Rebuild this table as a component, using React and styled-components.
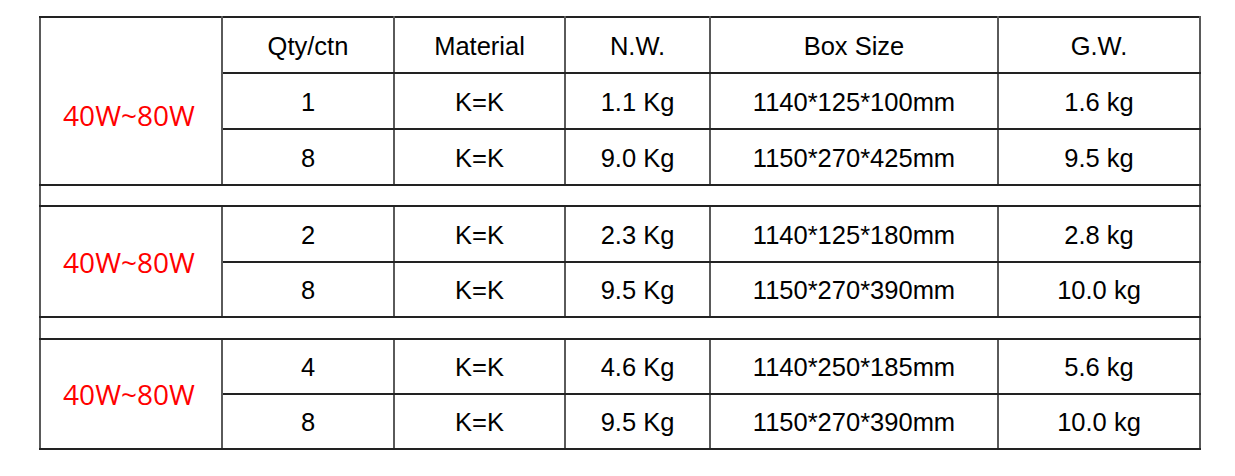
import React from "react";
import styled, { createGlobalStyle } from "styled-components";

const Global = createGlobalStyle`
  html, body { margin: 0; padding: 0; background: #fff; }
  body { font-family: "Liberation Sans", Arial, sans-serif; }
`;

const Page = styled.div`
  padding: 16px 0 0 39px;
`;

const Table = styled.table`
  border-collapse: collapse;
  table-layout: fixed;
  width: 1162px;
`;

const Cell = styled.td`
  border-top: 2px solid #222;
  border-bottom: 2px solid #222;
  border-left: 2px solid #5a5a5a;
  border-right: 2px solid #5a5a5a;
  height: ${(p) => p.$h || 54}px;
  padding: 3px 0 0 0;
  box-sizing: border-box;
  text-align: center;
  vertical-align: middle;
  font-size: 25.5px;
  color: #000;
  line-height: 1;
`;

const Label = styled(Cell)`
  font-family: "Open Sans", "Noto Sans", sans-serif;
  font-size: 28px;
  color: #ff0000;
  padding: ${(p) => p.$pt || 0}px 4px 0 0;
`;

const Spacer = styled.td`
  border-top: 2px solid #222;
  border-bottom: 2px solid #222;
  border-left: 2px solid #5a5a5a;
  border-right: 2px solid #5a5a5a;
  height: ${(p) => p.$h}px;
  padding: 0;
`;

const widths = [182, 172, 171, 145, 288, 202];

const groups = [
  {
    rows: [
      ["1", "K=K", "1.1 Kg", "1140*125*100mm", "1.6 kg"],
      ["8", "K=K", "9.0 Kg", "1150*270*425mm", "9.5 kg"],
    ],
    heights: [56, 56],
  },
  {
    rows: [
      ["2", "K=K", "2.3 Kg", "1140*125*180mm", "2.8 kg"],
      ["8", "K=K", "9.5 Kg", "1150*270*390mm", "10.0 kg"],
    ],
    heights: [56, 55],
    spacer: 19,
  },
  {
    rows: [
      ["4", "K=K", "4.6 Kg", "1140*250*185mm", "5.6 kg"],
      ["8", "K=K", "9.5 Kg", "1150*270*390mm", "10.0 kg"],
    ],
    heights: [55, 55],
    spacer: 20,
  },
];

const header = ["Qty/ctn", "Material", "N.W.", "Box Size", "G.W."];

export default function App() {
  return (
    <Page>
      <Global />
      <Table>
        <colgroup>
          {widths.map((w, i) => (
            <col key={i} style={{ width: w }} />
          ))}
        </colgroup>
        <tbody>
          <tr>
            <Label rowSpan={3} $pt={28}>40W~80W</Label>
            {header.map((h) => (
              <Cell key={h} $h={56}>{h}</Cell>
            ))}
          </tr>
          {groups[0].rows.map((r, i) => (
            <tr key={"a" + i}>
              {r.map((c, j) => (
                <Cell key={j} $h={groups[0].heights[i]}>{c}</Cell>
              ))}
            </tr>
          ))}
          {groups.slice(1).map((g, gi) => (
            <React.Fragment key={gi}>
              <tr>
                <Spacer colSpan={6} $h={g.spacer} />
              </tr>
              {g.rows.map((r, i) => (
                <tr key={i}>
                  {i === 0 && <Label rowSpan={2}>40W~80W</Label>}
                  {r.map((c, j) => (
                    <Cell key={j} $h={g.heights[i]}>{c}</Cell>
                  ))}
                </tr>
              ))}
            </React.Fragment>
          ))}
        </tbody>
      </Table>
    </Page>
  );
}
